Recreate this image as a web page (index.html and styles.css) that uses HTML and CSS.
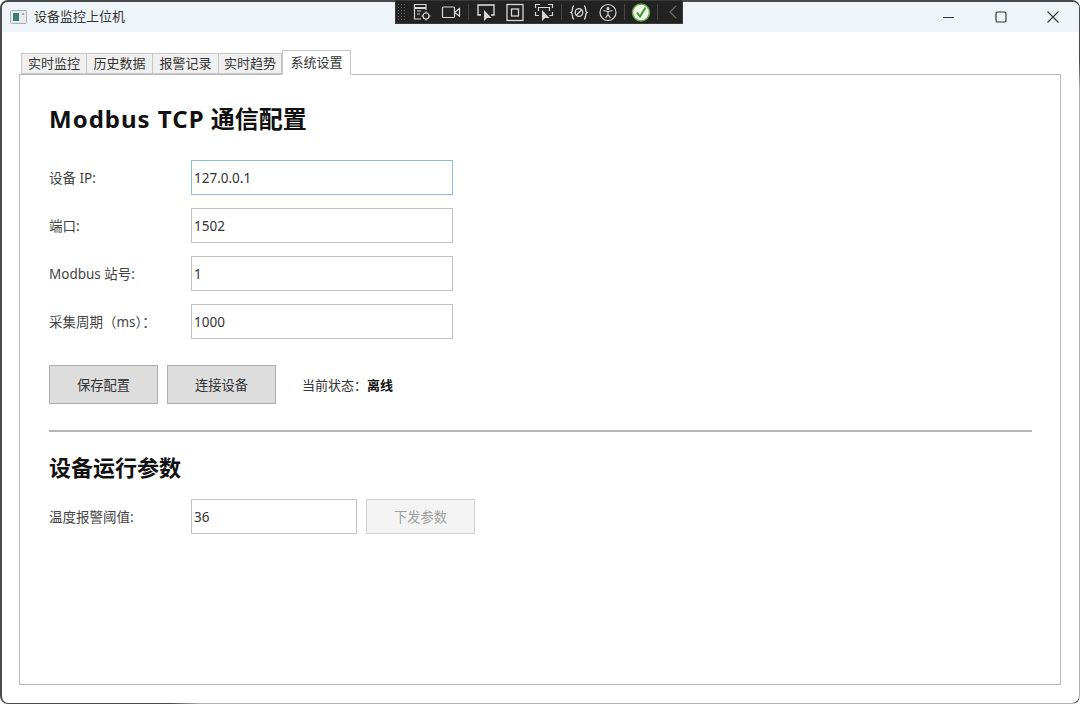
FILE: index.html
```html
<!DOCTYPE html>
<html lang="zh-CN">
<head>
  <meta charset="UTF-8">
  <title>设备监控上位机</title>
  <link rel="stylesheet" href="styles.css">
</head>
<body>

<div class="window">
  <!-- Title bar -->
  <div class="titlebar">
    <svg class="app-icon" width="18" height="14" viewBox="0 0 18 14">
      <rect x="0.5" y="0.5" width="16" height="13" rx="1" fill="#e8eced" stroke="#a9b0b3"/>
      <rect x="3" y="3" width="6" height="8" fill="#3b7f78"/>
      <rect x="12" y="3" width="2" height="2" fill="#9aa3a6"/>
    </svg>
    <span class="app-title">设备监控上位机</span>
    <div class="win-buttons">
      <svg width="12" height="12" viewBox="0 0 12 12"><path d="M0 6.5H11" stroke="#333" fill="none"/></svg>
      <svg width="12" height="12" viewBox="0 0 12 12"><rect x="1" y="1" width="10" height="10" rx="1.5" stroke="#333" stroke-width="1.2" fill="none"/></svg>
      <svg width="12" height="12" viewBox="0 0 12 12"><path d="M0.5 0.5L11.5 11.5M11.5 0.5L0.5 11.5" stroke="#333" stroke-width="1.1" fill="none"/></svg>
    </div>
  </div>

  <!-- Debug toolbar -->
  <div class="debug-bar">
    <span class="grip"></span>
    <svg class="dbg" width="20" height="20" viewBox="0 0 20 20" fill="none" stroke="#d8d8d8" stroke-width="1.2">
      <path d="M9 17H2.5V2.5H14V8"/><path d="M3 6H14" stroke-width="2"/><path d="M5 9H9M5 12H8"/>
      <circle cx="14" cy="14" r="3"/><path d="M14 9.5V11M14 17V18.5M9.5 14H11M17 14H18.5"/>
    </svg>
    <svg class="dbg" width="20" height="20" viewBox="0 0 20 20" fill="none" stroke="#d8d8d8" stroke-width="1.2">
      <rect x="1.5" y="5" width="12" height="10.5" rx="1"/><path d="M14 10L18.5 6.5V14L14 10.8"/>
    </svg>
    <span class="dbg-sep"></span>
    <svg class="dbg" width="20" height="20" viewBox="0 0 20 20" fill="none" stroke="#e4e4e4" stroke-width="1.3">
      <path d="M5 13H2V3H18V13H15"/><path d="M8 8V19L11 16H15.500Z" fill="#d8d8d8" stroke="none"/>
    </svg>
    <svg class="dbg" width="20" height="20" viewBox="0 0 20 20" fill="none" stroke="#d8d8d8" stroke-width="1.3">
      <rect x="2" y="2.500" width="16" height="16"/><rect x="6.500" y="7" width="7" height="7"/>
    </svg>
    <svg class="dbg" width="20" height="20" viewBox="0 0 20 20" fill="none" stroke="#d8d8d8" stroke-width="1.2">
      <path d="M1.500 6V2.500H6M14 2.500H18.500V6M1.500 10V13.500H5M18.500 10V13.500H15.500"/><path d="M4.500 9V5.500H15.500V9"/>
      <path d="M8 8V19L11 16H15.500Z" fill="#d8d8d8" stroke="none"/>
    </svg>
    <span class="dbg-sep"></span>
    <svg class="dbg" width="20" height="20" viewBox="0 0 20 20" fill="none" stroke="#d8d8d8" stroke-width="1.3">
      <path d="M5 4C2.500 4 4.500 9.500 2 10.500C4.500 11.500 2.500 17 5 17M15 4C17.500 4 15.500 9.500 18 10.500C15.500 11.500 17.500 17 15 17"/>
      <circle cx="10" cy="10.500" r="3.800"/><path d="M7.500 13L12.500 8" stroke-width="1.500"/>
    </svg>
    <svg class="dbg" width="20" height="20" viewBox="0 0 20 20" fill="none" stroke="#d8d8d8" stroke-width="1.2">
      <circle cx="10" cy="10.500" r="8"/><circle cx="10" cy="6.500" r="1" fill="#d8d8d8"/>
      <path d="M5.500 8.500L10 9.500L14.500 8.500M10 9.500V12.500L7.500 16M10 12.500L12.500 16"/>
    </svg>
    <span class="dbg-sep tight"></span>
    <svg class="dbg" width="20" height="20" viewBox="0 0 20 20">
      <circle cx="10" cy="10.500" r="8.500" fill="#f2f7ee" stroke="#62a93f" stroke-width="1.500"/>
      <path d="M6 10.500L9 14.500L14.500 5.500" fill="none" stroke="#3f9a2c" stroke-width="2"/>
    </svg>
    <span class="dbg-sep tight"></span>
    <svg class="dbg-back" width="8" height="14" viewBox="0 0 8 14" fill="none" stroke="#6e6e6e" stroke-width="1.2">
      <path d="M7 1L1 7L7 13"/>
    </svg>
  </div>

  <!-- Tabs -->
  <div class="tab-area">
    <div class="tabs">
      <span class="tab">实时监控</span>
      <span class="tab">历史数据</span>
      <span class="tab">报警记录</span>
      <span class="tab">实时趋势</span>
      <span class="tab tab-active">系统设置</span>
    </div>

    <div class="tab-panel">
      <h1 class="title-main"><span class="title-latin">Modbus TCP</span> 通信配置</h1>

      <div class="form-row">
        <label class="form-label">设备 IP:</label>
        <input class="text-box focused" type="text" value="127.0.0.1">
      </div>
      <div class="form-row">
        <label class="form-label">端口:</label>
        <input class="text-box" type="text" value="1502">
      </div>
      <div class="form-row">
        <label class="form-label">Modbus 站号:</label>
        <input class="text-box" type="text" value="1">
      </div>
      <div class="form-row">
        <label class="form-label">采集周期（ms）：</label>
        <input class="text-box" type="text" value="1000">
      </div>

      <div class="action-row">
        <button class="btn">保存配置</button>
        <button class="btn">连接设备</button>
        <span class="status">当前状态：<b>离线</b></span>
      </div>

      <hr class="divider">

      <h2 class="title-sub">设备运行参数</h2>

      <div class="form-row">
        <label class="form-label">温度报警阈值:</label>
        <input class="text-box short" type="text" value="36">
        <button class="btn btn-disabled" disabled>下发参数</button>
      </div>
    </div>
  </div>
</div>

</body>
</html>
```

FILE: styles.css
```css
* {
  box-sizing: border-box;
  margin: 0;
  padding: 0;
}
body {
  width: 1080px;
  height: 704px;
  overflow: hidden;
  background-color: #fff;
  font-family: "Noto Sans", "Noto Sans CJK SC", sans-serif;
  font-size: 13px;
  color: #333;
}
.window {
  position: relative;
  height: 704px;
  border-style: solid;
  border-color: transparent;
  border-width: 2px 1px 1px 2px;
  border-radius: 8px;
  background:
    linear-gradient(#fff, #fff) padding-box,
    linear-gradient(to right, #4a4a4a 170px, #b0b0b0 200px) bottom / 100% 1px no-repeat border-box,
    linear-gradient(#4a4a4a 60px, #b0b0b0 90px) right / 1px 100% no-repeat border-box,
    #4a4a4a border-box;
}
.titlebar {
  display: flex;
  align-items: center;
  height: 30px;
  padding-left: 8px;
  background-color: #eff4f9;
  border-radius: 6px 6px 0 0;
}
.app-icon {
  margin-right: 6px;
}
.app-title {
  padding-bottom: 3px;
  color: #333;
  font-size: 13px;
}
.win-buttons {
  display: flex;
  align-items: center;
  gap: 40px;
  margin-left: auto;
  padding-right: 20px;
}
.debug-bar {
  position: absolute;
  top: -2px;
  left: 393px;
  display: flex;
  align-items: center;
  width: 288px;
  height: 24px;
  padding-left: 1px;
  background-color: #222;
  border: 1px solid #3a3a3a;
}
.grip {
  width: 9px;
  height: 18px;
  margin-right: 1.5px;
  background-image: radial-gradient(#666 35%, transparent 40%);
  background-size: 3px 3px;
}
.dbg {
  margin: 0 4.5px;
}
.dbg-sep {
  width: 1px;
  height: 16px;
  margin: 0 2.5px;
  background-color: #444;
}
.dbg-sep.tight {
  margin: 0 1.5px;
}
.dbg-back {
  margin-left: 9px;
}
.tab-area {
  padding: 18px 18px 0 17px;
}
.tabs {
  display: flex;
  align-items: flex-end;
  height: 24px;
  padding-left: 2px;
  position: relative;
  z-index: 1;
}
.tab {
  width: 66px;
  height: 21px;
  line-height: 19px;
  text-align: center;
  color: #333;
  background-color: #f0f0f0;
  border: 1px solid #c6c6c6;
  border-left: none;
  font-size: 13px;
}
.tab:first-child {
  border-left: 1px solid #c6c6c6;
}
.tab-active {
  width: 69px;
  height: 25px;
  line-height: 22px;
  background-color: #fff;
  border-left: 1px solid #c6c6c6;
  border-bottom-color: #fff;
  margin-bottom: -1px;
}
.tab:nth-child(4) {
  width: 63px;
}
.tab-panel {
  height: 611px;
  padding: 27px 28px 0 29px;
  background-color: #fff;
  border: 1px solid #b9b9b9;
}
.title-main {
  font-size: 24px;
  line-height: 34px;
  font-weight: 700;
  color: #111;
  margin-bottom: 24px;
}
.title-latin {
  letter-spacing: 1px;
}
.form-row {
  display: flex;
  align-items: center;
  margin-bottom: 13px;
}
.form-label {
  width: 142px;
  padding-bottom: 2px;
  font-size: 13.5px;
  color: #444;
}
.text-box {
  width: 262px;
  height: 35px;
  padding: 0 2px;
  border: 1px solid #c2c2c2;
  background-color: #fff;
  font-family: inherit;
  font-size: 13.5px;
  color: #333;
  outline: none;
}
.text-box.focused {
  border-color: #8ebce6;
}
.text-box.short {
  width: 166px;
  margin-right: 9px;
}
.action-row {
  display: flex;
  align-items: center;
  margin-top: 26px;
}
.btn {
  width: 109px;
  height: 39px;
  background-color: #dddddd;
  border: 1px solid #adadad;
  font-family: inherit;
  font-size: 13.3px;
  color: #333;
  margin-right: 9px;
}
.status {
  margin-left: 17px;
  font-size: 13px;
}
.status b {
  color: #111;
}
.divider {
  height: 2px;
  margin: 26px 0 0;
  border: none;
  background-color: #b4b4b4;
}
.title-sub {
  font-size: 22px;
  line-height: 32px;
  font-weight: 700;
  color: #111;
  margin: 19px 0 16px;
}
.btn-disabled {
  height: 35px;
  background-color: #f4f4f4;
  border-color: #cfcfcf;
  color: #a0a0a0;
  margin-right: 0;
}
```
